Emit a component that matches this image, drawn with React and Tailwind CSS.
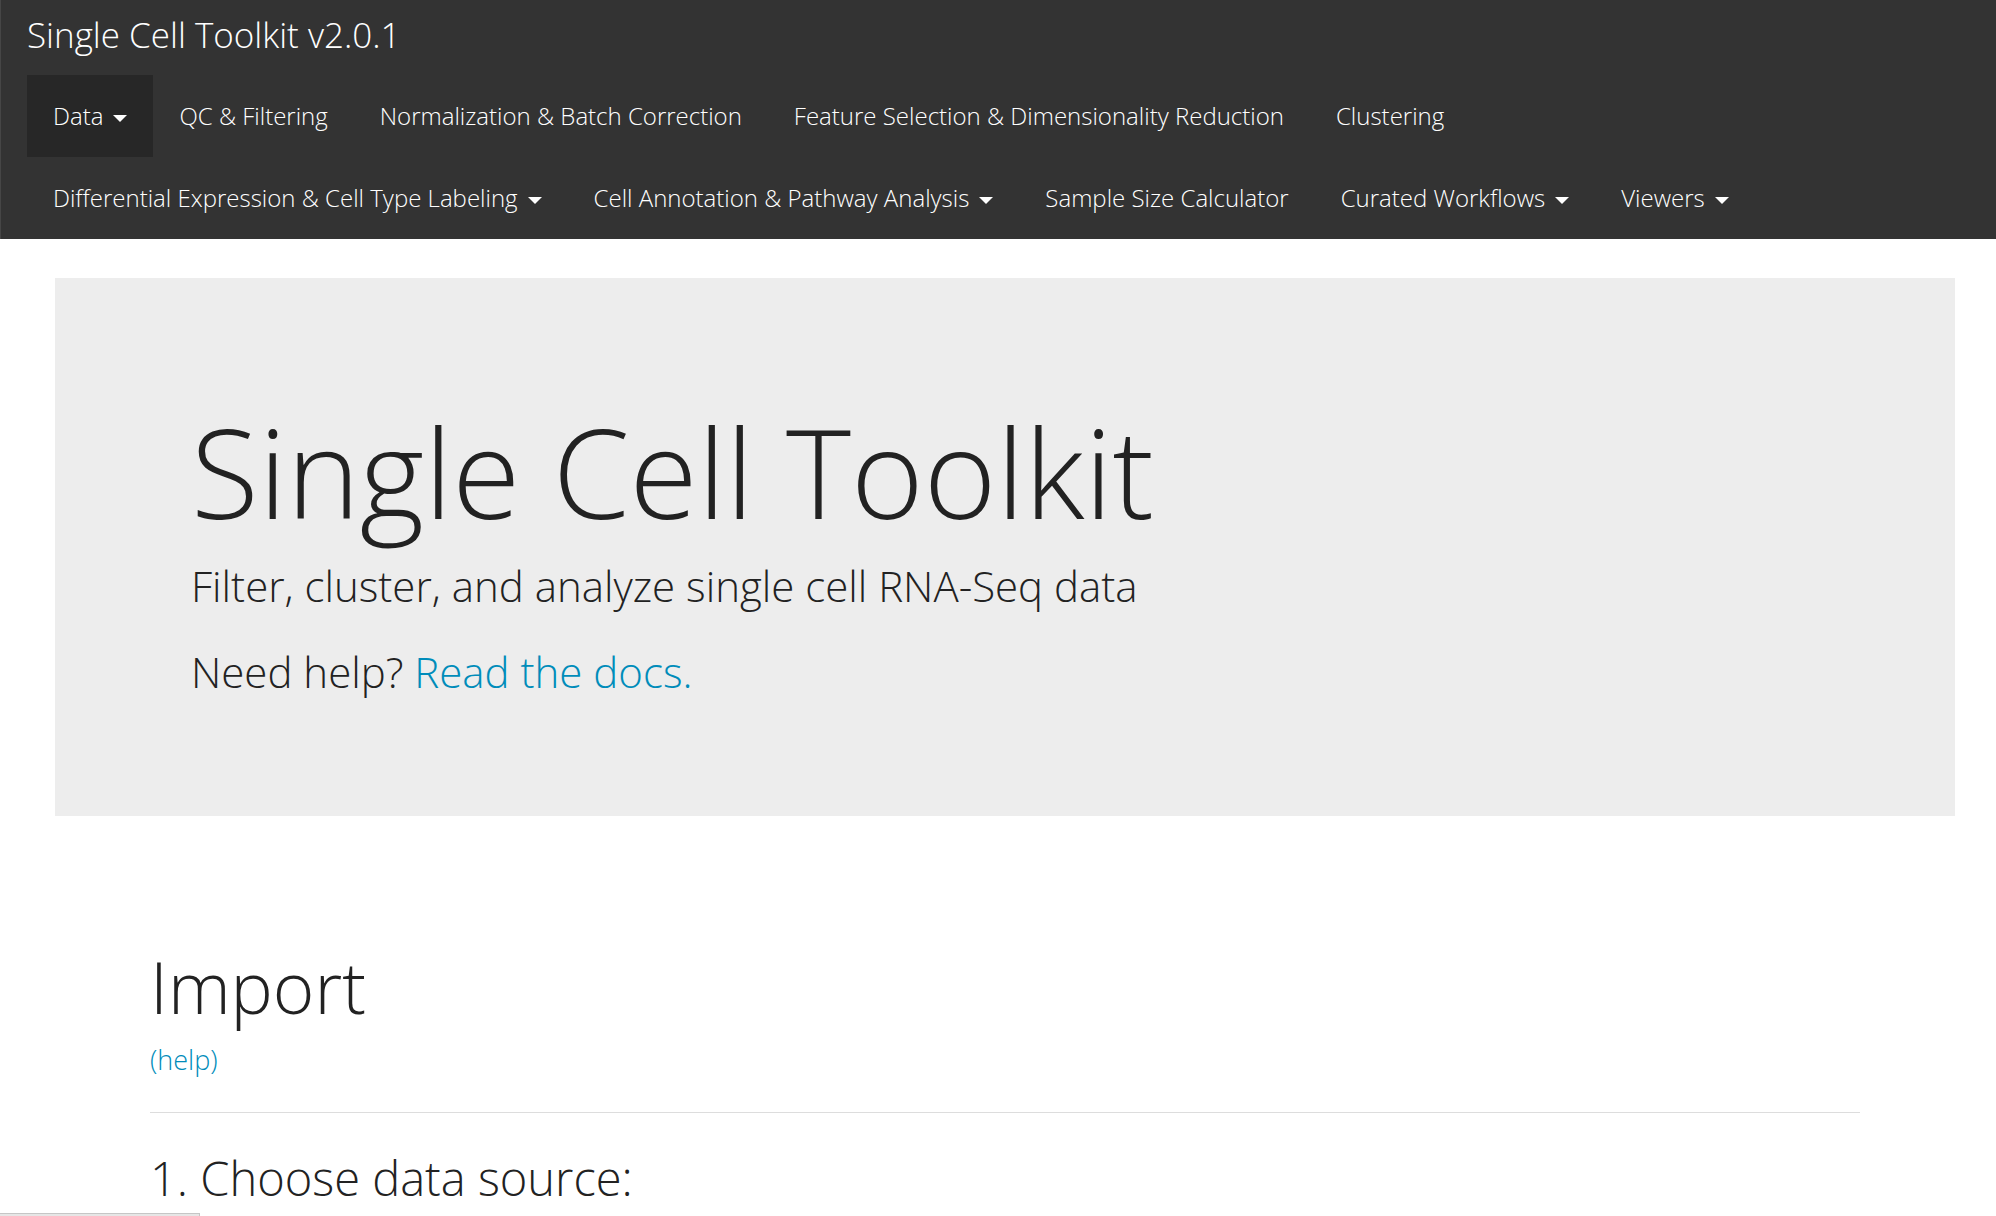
const navItems = [
  { label: "Data", menu: true, active: true },
  { label: "QC & Filtering" },
  { label: "Normalization & Batch Correction" },
  { label: "Feature Selection & Dimensionality Reduction" },
  { label: "Clustering" },
  { label: "Differential Expression & Cell Type Labeling", menu: true },
  { label: "Cell Annotation & Pathway Analysis", menu: true },
  { label: "Sample Size Calculator" },
  { label: "Curated Workflows", menu: true },
  { label: "Viewers", menu: true },
];

function Caret() {
  return (
    <svg className="mt-1 h-[7px] w-[14px] fill-current" viewBox="0 0 14 7" aria-hidden="true">
      <path d="M0 0h14L7 7z" />
    </svg>
  );
}

function NavItem({ label, menu, active }) {
  const look = active ? "bg-[#272727]" : "hover:bg-[#272727]";
  const shared = "flex items-center gap-[10px] px-[26px] text-[24px] leading-[82px] whitespace-nowrap";
  return (
    <li>
      {menu ? (
        <button type="button" aria-haspopup="menu" className={`${shared} ${look}`}>
          {label}
          <Caret />
        </button>
      ) : (
        <a href="#" className={`${shared} ${look}`}>
          {label}
        </a>
      )}
    </li>
  );
}

export default function App() {
  return (
    <div className="min-h-screen bg-white font-['Open_Sans',sans-serif] font-light text-[#222222]">
      <header className="border-l border-[#464646] bg-[#333333] px-[26px] text-white">
        <a href="#" className="block pb-[5px] text-[35px] leading-[70px]">
          Single Cell Toolkit v2.0.1
        </a>
        <nav aria-label="Main">
          <ul className="flex flex-wrap">
            {navItems.map((item) => (
              <NavItem key={item.label} {...item} />
            ))}
          </ul>
        </nav>
      </header>

      <main>
        <section className="mt-[39px] mr-[41px] ml-[55px] bg-[#ededed] px-[136px] pt-[126px] pb-[114px]">
          <h1 className="text-[124px] leading-[134px]">Single Cell Toolkit</h1>
          <p className="mt-[18px] text-[42px] leading-[60px]">
            Filter, cluster, and analyze single cell RNA-Seq data
          </p>
          <p className="mt-[26px] text-[42px] leading-[60px]">
            Need help?{" "}
            <a href="#" className="text-[#008cba]">
              Read the docs.
            </a>
          </p>
        </section>

        <section className="mr-[136px] ml-[150px] pt-[131px]">
          <h2 className="text-[71px] leading-[80px]">Import</h2>
          <a href="#" className="mt-[13px] inline-block text-[27px] leading-[40px] text-[#008cba]">
            (help)
          </a>
          <hr className="mt-8 border-[#dddddd]" />
          <h3 className="mt-[38px] text-[47px] leading-[54px]">1. Choose data source:</h3>
        </section>
      </main>

      <div className="fixed bottom-0 left-0 h-[3px] w-[200px] border-t border-r border-[#c6c6c6] bg-[#e6e6e6]" />
    </div>
  );
}
